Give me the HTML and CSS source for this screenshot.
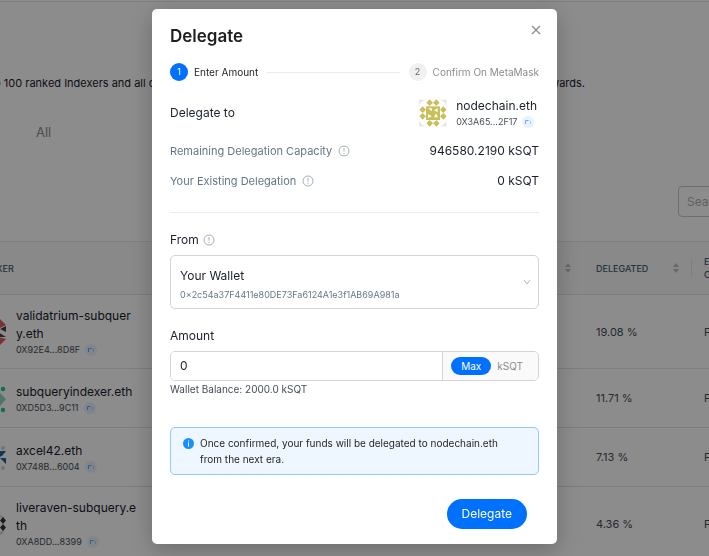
FILE: index.html
```html
<!DOCTYPE html>
<html lang="en">
<head>
<meta charset="utf-8">
<meta name="viewport" content="width=device-width, initial-scale=1">
<title>Delegate</title>
<link rel="stylesheet" href="styles.css">
</head>
<body>
<svg class="defs" aria-hidden="true">
  <symbol id="copy" viewBox="0 0 12 12"><circle cx="6" cy="6" r="6" fill="#e9f3ff"/><path d="M3.500 8V4.500H6" fill="none" stroke="#5ea6ff"/><path d="M8.500 5v3M6 4.500h1.500" fill="none" stroke="#a9cfff"/></symbol>
  <symbol id="hint" viewBox="0 0 12 12"><circle cx="6" cy="6" r="5" fill="none" stroke="#a3afba"/><path d="M6 3v3.600M6 7.800v1.200" stroke="#a3afba" fill="none"/></symbol>
  <symbol id="sorter" viewBox="0 0 8 12"><path d="M4 1l3 4H1zM4 11L1 7h6z" fill="#bfbfbf"/></symbol>
  <symbol id="diamond" viewBox="0 0 20 20"><path d="M10 0l3 3 4 4 3 3-3 3-4 4-3 3-3-3-4-4-3-3 3-3 4-4z" fill="#c9bf5b"/></symbol>
</svg>

<main class="page">
  <header class="topbar"></header>
  <p class="intro"><span>p 100 ranked Indexers and all other</span><span>rewards.</span></p>
  <nav class="tabs"><a href="#all">All</a></nav>
  <div class="tools"><input class="search" type="search" placeholder="Search" aria-label="Search"></div>
  <table class="indexers">
    <colgroup><col class="c-name"><col><col class="c-share"><col class="c-last"></colgroup>
    <thead>
      <tr>
        <th>INDEXER</th>
        <th><div class="sort end"><svg class="sorter"><use href="#sorter"/></svg></div></th>
        <th><div class="sort split"><span>DELEGATED</span><svg class="sorter"><use href="#sorter"/></svg></div></th>
        <th>E<br>C</th>
      </tr>
    </thead>
    <tbody>
      <tr>
        <td><div class="indexer">
          <svg class="avatar" viewBox="0 0 28 28"><path d="M20 0h1l7 7-8 4zM20 19l8 2-7 7h-1z" fill="#e25a5f"/><path d="M28 8v6l-6-3zM20 14l8 5h-8z" fill="#444"/></svg>
          <div><div class="name">validatrium-subquery.eth</div><div class="addr">0X92E4...8D8F <svg class="copy"><use href="#copy"/></svg></div></div>
        </div></td>
        <td></td><td>19.08 %</td><td>F</td>
      </tr>
      <tr>
        <td><div class="indexer">
          <svg class="avatar" viewBox="0 0 28 28"><path d="M22 8l6 6-6 7z" fill="#8ed6bd"/><circle cx="25" cy="4" r="2.200" fill="#2dbf8c"/><circle cx="25" cy="25" r="2.200" fill="#2dbf8c"/></svg>
          <div><div class="name">subqueryindexer.eth</div><div class="addr">0XD5D3...9C11 <svg class="copy"><use href="#copy"/></svg></div></div>
        </div></td>
        <td></td><td>11.71 %</td><td>F</td>
      </tr>
      <tr>
        <td><div class="indexer">
          <svg class="avatar" viewBox="0 0 28 28"><path d="M21 7h7l-4 5-3 1zM28 20l-6-6h6z" fill="#1e6498"/><circle cx="25" cy="4" r="2" fill="#d5d5d5"/><circle cx="25" cy="24" r="2" fill="#d5d5d5"/></svg>
          <div><div class="name">axcel42.eth</div><div class="addr">0X748B...6004 <svg class="copy"><use href="#copy"/></svg></div></div>
        </div></td>
        <td></td><td>7.13 %</td><td>F</td>
      </tr>
      <tr>
        <td><div class="indexer">
          <svg class="avatar" viewBox="0 0 28 28"><path d="M21 4l6 4-6-1zM21 23l6-4-3 5-3 1z" fill="#d0d0d0"/><path d="M25 7l3 3.500-3 3.500-3-3.500zM25 14l3 3.500-3 3.500-3-3.500z" fill="#333"/></svg>
          <div><div class="name">liveraven-subquery.eth</div><div class="addr">0XA8DD...8399 <svg class="copy"><use href="#copy"/></svg></div></div>
        </div></td>
        <td></td><td>4.36 %</td><td>F</td>
      </tr>
    </tbody>
  </table>
</main>

<div class="mask">
  <section class="modal" role="dialog" aria-modal="true" aria-labelledby="title">
    <button class="close" type="button" aria-label="Close"><svg viewBox="0 0 10 10"><path d="M1 1l8 8M9 1L1 9" fill="none" stroke="#8c8c8c" stroke-width="1.300"/></svg></button>
    <h1 id="title">Delegate</h1>
    <ol class="steps">
      <li class="active"><span class="num">1</span><span>Enter Amount</span></li>
      <li class="rule" role="presentation"></li>
      <li><span class="num">2</span><span>Confirm On MetaMask</span></li>
    </ol>

    <div class="row target">
      <span>Delegate to</span>
      <div class="account">
        <svg class="identicon" viewBox="0 0 84 84">
          <path d="M1 20V2h20L8 7zM63 2h19v18l-6-12zM1 64v18h20L8 77zM82 64v18H63l13-6z" fill="#e2e2e2"/>
          <g>
            <use href="#diamond" x="22" y="1" width="20" height="20"/><use href="#diamond" x="42" y="1" width="20" height="20"/>
            <use href="#diamond" x="1" y="22" width="20" height="20"/><use href="#diamond" x="1" y="42" width="20" height="20"/>
            <use href="#diamond" x="63" y="22" width="20" height="20"/><use href="#diamond" x="63" y="42" width="20" height="20"/>
            <use href="#diamond" x="22" y="63" width="20" height="20"/><use href="#diamond" x="42" y="63" width="20" height="20"/>
          </g>
          <path d="M21 22h42v41H21z" fill="#c9bf5b"/>
          <path d="M27 28h12v9zM56 28v12l-11-6zM27 45l11 7-11 5zM51 43l6 12H45z" fill="#fff"/>
        </svg>
        <div><div class="name">nodechain.eth</div><div class="addr">0X3A65...2F17 <svg class="copy"><use href="#copy"/></svg></div></div>
      </div>
    </div>
    <div class="row"><span class="key">Remaining Delegation Capacity <svg class="hint"><use href="#hint"/></svg></span><span>946580.2190 kSQT</span></div>
    <div class="row"><span class="key">Your Existing Delegation <svg class="hint"><use href="#hint"/></svg></span><span>0 kSQT</span></div>
    <hr>

    <form>
      <label class="label" for="from">From <svg class="hint"><use href="#hint"/></svg></label>
      <div class="picker">
        <select id="from"><option>Your Wallet</option></select>
        <span class="wallet">0×2c54a37F4411e80DE73Fa6124A1e3f1AB69A981a</span>
        <svg class="chevron" viewBox="0 0 8 6"><path d="M1 1l3 4 3-4" fill="none" stroke="#b5b5b5"/></svg>
      </div>
      <label class="label" for="amount">Amount</label>
      <div class="amount">
        <input id="amount" type="text" inputmode="decimal" value="0">
        <div class="addon"><button class="max" type="button">Max</button><span>kSQT</span></div>
      </div>
      <p class="balance">Wallet Balance: 2000.0 kSQT</p>
      <div class="alert" role="note">
        <svg class="info" viewBox="0 0 11 11"><circle cx="5.500" cy="5.500" r="5.500" fill="#1890ff"/><path d="M5.500 2.500v1M5.500 4.500v4" stroke="#fff" fill="none"/></svg>
        <span>Once confirmed, your funds will be delegated to nodechain.eth from the next era.</span>
      </div>
      <div class="actions"><button class="submit" type="submit">Delegate</button></div>
    </form>
  </section>
</div>
</body>
</html>
```
FILE: styles.css
```css
* { box-sizing: border-box; }
body {
  margin: 0;
  height: 100vh;
  overflow: hidden;
  font: 12px/18px Inter, "Liberation Sans", sans-serif;
  color: #1a202c;
  background: #fff;
}
button, input, select { font: inherit; color: inherit; margin: 0; }
.defs { position: absolute; width: 0; height: 0; }
h1, p, ol { margin: 0; padding: 0; }

.page { overflow: hidden; height: 100%; }
.topbar { height: 2px; border-bottom: 1px solid #e6e6e6; }
.intro {
  display: flex;
  justify-content: space-between;
  margin: 72px 124px 0 -6px;
  font-size: 11px;
}
.tabs { padding: 31px 36px 0; font-size: 13px; }
.tabs a { color: #8c8c8c; text-decoration: none; }
.tools { display: flex; justify-content: flex-end; margin: 45px -60px 24px 0; }
.search {
  width: 91px;
  height: 31px;
  padding: 0 8px;
  border: 1px solid #c8c8c8;
  border-radius: 4px;
  background: none;
}
.search::placeholder { color: #b0b0b0; }

.indexers {
  width: calc(100% + 83px);
  margin-left: -33px;
  border-collapse: collapse;
  table-layout: fixed;
  font-size: 11px;
  color: #454d58;
}
.c-name { width: 184px; }
.c-share { width: 108px; }
.c-last { width: 67px; }
.indexers th, .indexers td {
  padding: 0 12px;
  text-align: left;
  border-bottom: 1px solid #e4e4e4;
}
.indexers th {
  height: 53px;
  font-size: 9px;
  line-height: 13px;
  font-weight: 500;
  color: #4a5a67;
  background: #fafafa;
  border-top: 1px solid #e8e8e8;
}
.indexers th:first-child { padding-left: 8px; }
.indexers td { height: 59px; }
.indexers td:first-child { padding: 12px 12px 11px; }
.sort { display: flex; justify-content: space-between; align-items: center; }
.sort.end { justify-content: flex-end; }
.sort.split { height: 17px; margin-right: -12px; padding-right: 11px; border-right: 1px solid #e4e4e4; }
.sorter { width: 8px; height: 12px; }
.indexer { display: flex; align-items: center; gap: 10px; }
.indexer > div { width: 122px; }
.avatar { width: 28px; height: 28px; flex: none; margin-left: -1px; }
.name { font-size: 12px; line-height: 18px; color: #1a202c; word-break: break-all; }
.addr { display: flex; align-items: center; gap: 5px; font-size: 9px; line-height: 14px; color: #454d58; }
.copy { width: 12px; height: 12px; }

.mask {
  position: fixed;
  inset: 0;
  overflow: auto;
  padding: 9px 16px;
  background: rgba(0, 0, 0, .45);
}
.modal {
  position: relative;
  max-width: 405px;
  margin: 0 auto;
  padding: 15px 18px;
  border-radius: 5px;
  background: #fff;
  box-shadow: 0 6px 24px rgba(0, 0, 0, .24);
}
.close { position: absolute; top: 16px; right: 16px; padding: 0; border: 0; background: none; line-height: 0; }
.close svg { width: 10px; height: 10px; }
h1 { font-size: 17px; line-height: 24px; font-weight: 600; color: #1f1f1f; }
.steps { display: flex; align-items: center; gap: 9px; margin: 15px 0 12px; list-style: none; font-size: 10px; color: #8c8c8c; }
.steps li { display: flex; align-items: center; gap: 6px; }
.steps .active { color: #1f1f1f; }
.steps .rule { flex: 1; height: 1px; background: #ececec; }
.num { width: 18px; height: 18px; border-radius: 50%; text-align: center; font-size: 9px; background: #f0f0f0; color: #666; }
.active .num { background: #0070ff; color: #fff; }

.row { display: flex; justify-content: space-between; align-items: center; height: 30px; }
.row.target { height: 43px; padding-bottom: 3px; }
.account { display: flex; align-items: center; gap: 9px; padding-right: 2px; }
.identicon { width: 28px; height: 28px; }
.key { display: flex; align-items: center; gap: 6px; font-size: 11px; color: #657786; }
.hint { width: 12px; height: 12px; }
hr { height: 1px; margin: 16px 0 18px; border: 0; background: #ececec; }

.label { display: flex; align-items: center; gap: 4px; margin-bottom: 6px; }
.picker { display: grid; margin-bottom: 18px; }
.picker > * { grid-area: 1 / 1; }
.picker select {
  width: 100%;
  height: 54px;
  padding: 0 9px 12px;
  border: 1px solid #d4d4d4;
  border-radius: 5px;
  appearance: none;
  background: #fff;
}
.wallet { align-self: end; padding: 0 10px 7px; font-size: 9px; line-height: 14px; color: #657786; pointer-events: none; }
.chevron { width: 8px; height: 6px; place-self: center end; margin-right: 8px; pointer-events: none; }
.amount { display: flex; height: 30px; border: 1px solid #d4d4d4; border-radius: 5px; overflow: hidden; }
.amount input { flex: 1; min-width: 0; padding: 0 9px; border: 0; background: #fff; }
.addon { display: flex; align-items: center; gap: 6px; padding: 0 15px 0 8px; border-left: 1px solid #d4d4d4; background: #fafafa; color: #8c8c8c; font-size: 10px; }
.max { height: 18px; padding: 0 10px; border: 0; border-radius: 9px; background: #0070ff; color: #fff; }
.balance { font-size: 10px; line-height: 16px; color: #454d58; }
.alert {
  display: flex;
  gap: 6px;
  margin-top: 30px;
  padding: 7px 24px 7px 12px;
  border: 1px solid #8fcaff;
  border-radius: 5px;
  background: #eef6ff;
  color: #262626;
  font-size: 10px;
  line-height: 16px;
}
.info { width: 11px; height: 11px; flex: none; margin-top: 3px; }
.actions { display: flex; justify-content: flex-end; padding: 24px 12px 0; }
.submit { height: 30px; padding: 0 15px; border: 0; border-radius: 15px; background: #0070ff; color: #fff; }
```
